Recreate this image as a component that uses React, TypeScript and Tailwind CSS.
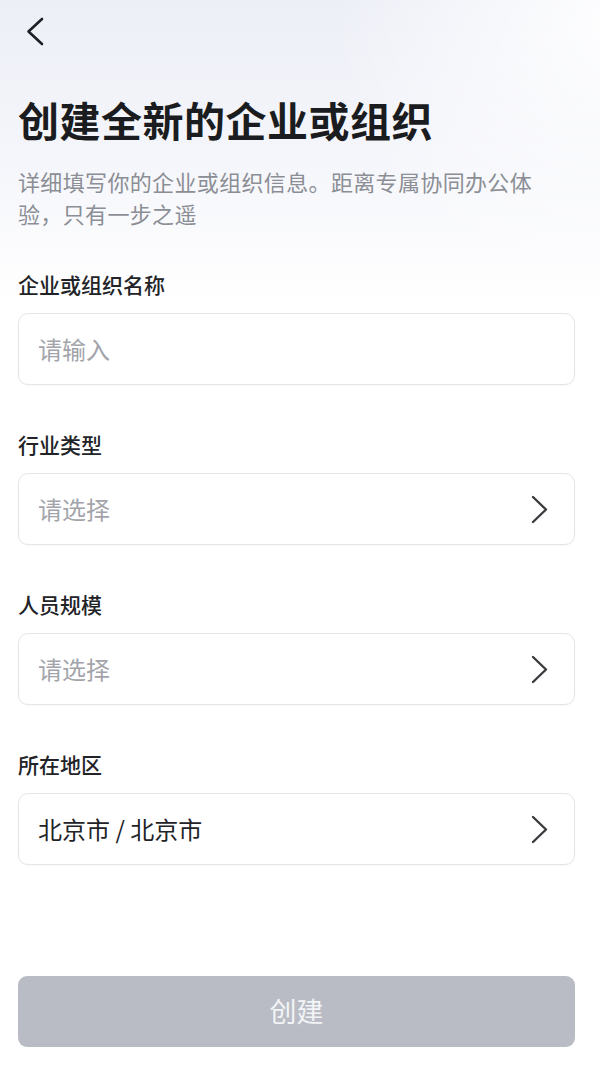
import { useState } from 'react';

const font = { fontFamily: '"Noto Sans CJK SC", "Noto Sans", sans-serif' };

const Chevron = () => (
    <svg width="17" height="29" viewBox="0 0 17 29" fill="none" className="shrink-0">
        <path d="M2 2 L15 14.5 L2 27" stroke="#3a3b3f" strokeWidth="2.4" strokeLinecap="round" strokeLinejoin="round" />
    </svg>
);

const Field = ({ label, value, placeholder, select }: { label: string; value?: string; placeholder: string; select?: boolean }) => (
    <div className="mt-[44px] first:mt-[40px]">
        <div className="text-[21px] leading-[30px] font-medium text-[#222327]">{label}</div>
        <div className="mt-[14px] h-[72px] rounded-[10px] border-[1.5px] border-[#e4e5e8] bg-white flex items-center pl-[19px] pr-[26px] shadow-[0_1px_2px_rgba(0,0,0,0.03)]">
            <span className={`flex-1 text-[24px] ${value ? 'text-[#222327]' : 'text-[#a2a4aa]'}`}>{value ?? placeholder}</span>
            {select && <Chevron />}
        </div>
    </div>
);

export default function App() {
    const [name] = useState('');

    return (
        <div
            style={font}
            className="relative w-[600px] h-[1066px] overflow-hidden bg-[linear-gradient(180deg,#edeff7_0px,#f5f6fb_160px,#ffffff_300px)]"
        >
            {/* soft glow, top right */}
            <div className="absolute -top-[260px] left-[330px] w-[560px] h-[560px] rounded-full bg-[radial-gradient(circle,rgba(255,255,255,0.9)_0%,rgba(255,255,255,0)_70%)] pointer-events-none" />

            <div className="relative pl-[18px] pr-[25px]">
                <div className="pt-[17px] pl-[8px]">
                    <svg width="18" height="29" viewBox="0 0 18 29" fill="none">
                        <path d="M16 2 L2.5 14.5 L16 27" stroke="#1f2024" strokeWidth="2.6" strokeLinecap="round" strokeLinejoin="round" />
                    </svg>
                </div>

                <h1 className="mt-[49px] text-[41px] leading-[48px] font-bold text-[#1b1c20] tracking-[0.5px]">创建全新的企业或组织</h1>
                <p className="mt-[22px] text-[22px] leading-[32px] text-[#8b8e95] tracking-[0.35px] pr-[28px]">
                    详细填写你的企业或组织信息。距离专属协同办公体验，只有一步之遥
                </p>

                <div>
                    <Field label="企业或组织名称" placeholder="请输入" value={name || undefined} />
                    <Field label="行业类型" placeholder="请选择" select />
                    <Field label="人员规模" placeholder="请选择" select />
                    <Field label="所在地区" placeholder="请选择" value="北京市 / 北京市" select />
                </div>

                <button className="mt-[111px] w-full h-[71px] rounded-[9px] bg-[#b9bcc4] text-[27px] text-[#f3f4f6] flex items-center justify-center">
                    创建
                </button>
            </div>
        </div>
    );
}
